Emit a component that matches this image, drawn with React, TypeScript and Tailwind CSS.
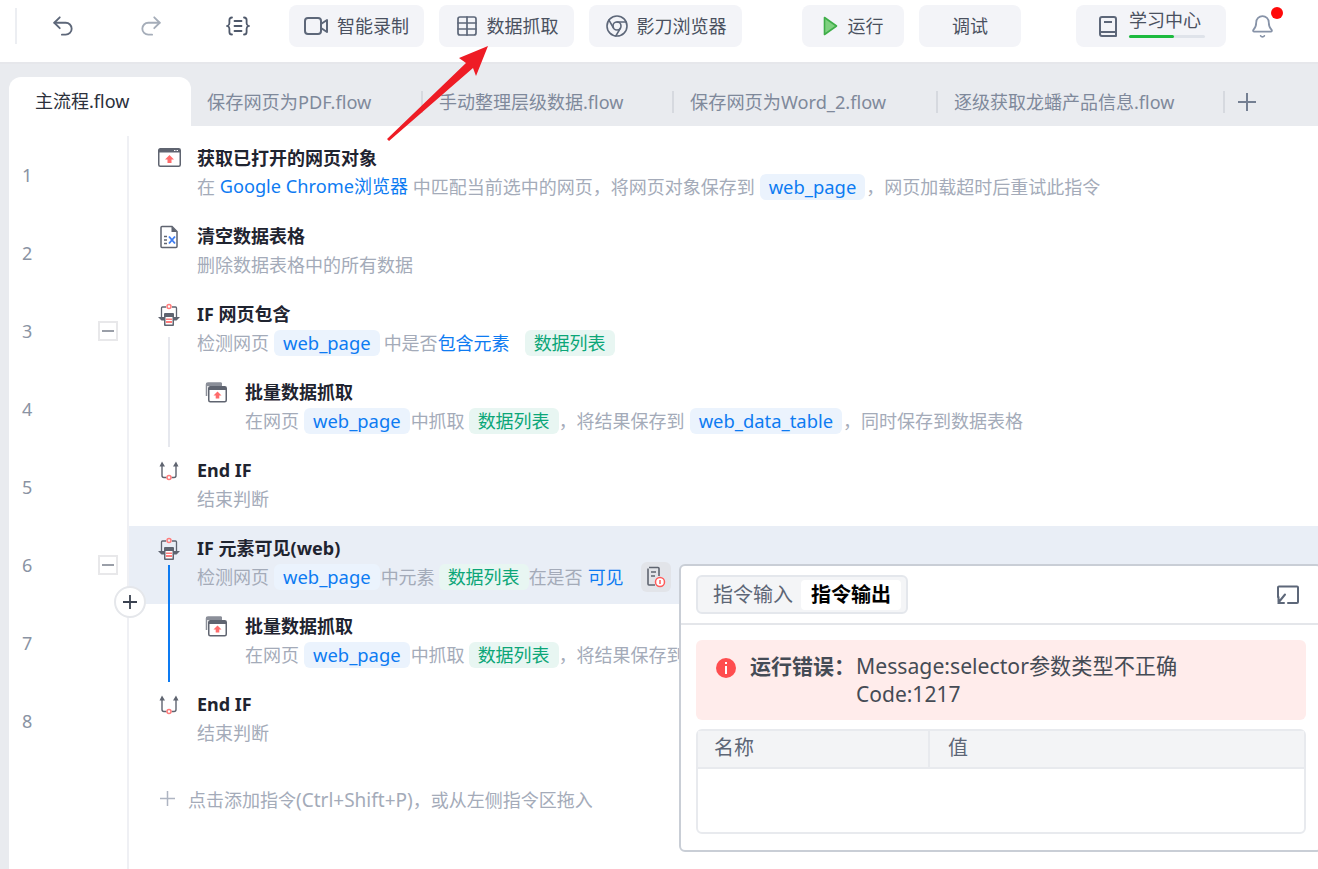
import { Bell, Chrome, Redo2, Table, Undo2 } from 'lucide-react';
import type { ReactNode } from 'react';

function ToolButton({ className, children }: { className: string; children: ReactNode }) {
  return (
    <div className={`flex h-[42px] items-center justify-center rounded-lg bg-[#f3f4f8] text-[18px] text-[#4a5160] ${className}`}>
      {children}
    </div>
  );
}

function VideoIcon() {
  return (
    <svg width="25" height="20" viewBox="0 0 25 20" fill="none" stroke="#5d6779" strokeWidth="2" strokeLinejoin="round">
      <rect x="1" y="2" width="16" height="16" rx="3" />
      <path d="M17 8l6-4v12l-6-4" />
    </svg>
  );
}

function BracesIcon() {
  return (
    <svg width="24" height="20" viewBox="0 0 24 20" fill="none" stroke="#4f596b" strokeWidth="1.8" strokeLinecap="round">
      <path d="M6 1.500c-2 0-2.600 1-2.600 2.600v3.200c0 1.400-.6 2.200-2 2.700 1.400.5 2 1.300 2 2.700v3.200c0 1.600.6 2.600 2.600 2.600" />
      <path d="M18 1.500c2 0 2.600 1 2.600 2.600v3.200c0 1.400.6 2.200 2 2.700-1.400.5-2 1.300-2 2.700v3.200c0 1.600-.6 2.600-2.600 2.600" />
      <path d="M8.500 5h7M8.500 10h7M8.500 15h7" />
    </svg>
  );
}

function BookIcon() {
  return (
    <svg width="18" height="21" viewBox="0 0 18 21" fill="none" stroke="#5d6779" strokeWidth="2" strokeLinejoin="round">
      <path d="M3 1h12a2 2 0 0 1 2 2v17H3a2 2 0 0 1-2-2V3a2 2 0 0 1 2-2z" />
      <path d="M1 16h16M5 6h8" />
    </svg>
  );
}

function Toolbar() {
  return (
    <div className="flex h-[64px] items-center border-b-2 border-[#e6e7eb] bg-white pb-[10px] pl-[15px]">
      <div className="h-[36px] w-[2px] bg-[#eceef2]" />
      <Undo2 className="ml-[33px] h-[26px] w-[26px] text-[#5d6779]" strokeWidth={1.7} />
      <Redo2 className="ml-[62px] h-[26px] w-[26px] text-[#a5adb9]" strokeWidth={1.7} />
      <div className="ml-[62px] flex w-[24px]">
        <BracesIcon />
      </div>
      <ToolButton className="ml-[39px] w-[135px] gap-[8px]">
        <VideoIcon />
        智能录制
      </ToolButton>
      <ToolButton className="ml-[15px] w-[135px] gap-[8px]">
        <Table className="h-[24px] w-[24px] text-[#5d6779]" strokeWidth={1.7} />
        数据抓取
      </ToolButton>
      <ToolButton className="ml-[15px] w-[153px] gap-[8px]">
        <Chrome className="h-[24px] w-[24px] text-[#5d6779]" strokeWidth={1.6} />
        影刀浏览器
      </ToolButton>
      <ToolButton className="ml-[60px] w-[102px] gap-[10px]">
        <svg width="15" height="20" viewBox="0 0 15 20">
          <path d="M1.500 1.500L13.500 10 1.500 18.500z" fill="#7fd080" stroke="#3fae49" strokeWidth="1.6" strokeLinejoin="round" />
        </svg>
        运行
      </ToolButton>
      <ToolButton className="ml-[15px] w-[102px]">调试</ToolButton>
      <ToolButton className="ml-[55px] w-[150px] gap-[12px] pl-[2px]">
        <BookIcon />
        <div className="-mt-[6px] flex w-[76px] flex-col">
          <span className="text-[18px] leading-[24px]">学习中心</span>
          <div className="mt-[3px] h-[3px] w-[76px] rounded-full bg-[#dfe3ea]">
            <div className="h-[3px] w-[45px] rounded-full bg-[#1dbb3f]" />
          </div>
        </div>
      </ToolButton>
      <div className="relative ml-[24px]">
        <Bell className="h-[25px] w-[25px] text-[#8793a8]" strokeWidth={1.7} />
        <div className="absolute top-[-7px] left-[21px] h-[12px] w-[12px] rounded-full bg-[#ff0a0a]" />
      </div>
    </div>
  );
}

const tabs = [
  { name: '保存网页为PDF.flow', className: 'w-[232px] text-[18.2px]' },
  { name: '手动整理层级数据.flow', className: 'w-[251px] text-[18px]' },
  { name: '保存网页为Word_2.flow', className: 'w-[264px] text-[18.2px]' },
  { name: '逐级获取龙蟠产品信息.flow', className: 'w-[287px] text-[18px]' },
];

function TabBar() {
  return (
    <div className="flex h-[62px] items-end bg-[#e9ebef] pl-[9px]">
      <div className="flex h-[49px] w-[182px] items-center rounded-t-xl bg-white pl-[26px] text-[18px] text-[#2b303b]">
        主流程.flow
      </div>
      {tabs.map((tab) => (
        <div key={tab.name} className={`flex h-[49px] items-center justify-between pl-[16px] text-[#7f899b] ${tab.className}`}>
          <span className="pt-[2px] whitespace-nowrap">{tab.name}</span>
          <div className="h-[22px] w-[2px] bg-[#d6d9df]" />
        </div>
      ))}
      <div className="flex h-[49px] items-center pl-[12px]">
        <svg width="20" height="20" viewBox="0 0 20 20" stroke="#747f92" strokeWidth="2">
          <path d="M10 1v18M1 10h18" />
        </svg>
      </div>
    </div>
  );
}

function T({ children }: { children: ReactNode }) {
  return <span className="whitespace-pre text-[#a4abb9]">{children}</span>;
}

function B({ children }: { children: ReactNode }) {
  return <span className="whitespace-pre text-[#0d7bf2]">{children}</span>;
}

function Tag({ children }: { children: ReactNode }) {
  return (
    <span className="mr-[1px] ml-[5px] flex h-[26px] items-center rounded-md bg-[#ebf3fd] px-[9px] text-[18.4px] whitespace-nowrap text-[#0d7bf2]">
      {children}
    </span>
  );
}

function Green({ children }: { children: ReactNode }) {
  return (
    <span className="ml-[4px] flex h-[26px] items-center rounded-md bg-[#e8f6f2] px-[9px] whitespace-nowrap text-[#0ca678]">
      {children}
    </span>
  );
}

function PageIcon() {
  return (
    <svg width="24" height="22" viewBox="0 0 24 22" fill="none">
      <rect x="0.750" y="1.750" width="21.500" height="17.500" rx="1.500" stroke="#5f6470" strokeWidth="1.500" fill="#fff" />
      <path d="M1 2h21v3.500H1z" fill="#5f6470" />
      <path d="M16 3h1.500v1H16zM18.500 3H20v1h-1.500z" fill="#fff" />
      <path d="M11.500 8l4.500 4.500h-2.500v3.500h-4v-3.500H7z" fill="#ff6b6b" />
    </svg>
  );
}

function PagesIcon() {
  return (
    <svg width="24" height="22" viewBox="0 0 24 22" fill="none">
      <path d="M2.500 15V3.500a1.500 1.500 0 0 1 1.500-1.500h13.500" stroke="#8b8f99" strokeWidth="1.500" />
      <path d="M2 2h16v3H2z" fill="#8b8f99" />
      <rect x="4.750" y="5.750" width="17.500" height="15" rx="1.500" stroke="#5f6470" strokeWidth="1.500" fill="#fff" />
      <path d="M5 6h17v3H5z" fill="#5f6470" />
      <path d="M13.500 10.500l4 4h-2.200v3h-3.600v-3H9.500z" fill="#ff6b6b" />
    </svg>
  );
}

function SheetIcon() {
  return (
    <svg width="24" height="24" viewBox="0 0 24 24" fill="none">
      <path d="M4 1.500h10l5 5v15a1 1 0 0 1-1 1H4a1 1 0 0 1-1-1v-19a1 1 0 0 1 1-1z" stroke="#5f6470" strokeWidth="1.500" />
      <path d="M13.500 1.500v5.500H19z" fill="#5f6470" />
      <path d="M6 11.500h3M6 15h3M6 18.500h3" stroke="#5f6470" strokeWidth="1.500" />
      <path d="M11 11.500l6 7M17 11.500l-6 7" stroke="#3f7df0" strokeWidth="1.900" />
    </svg>
  );
}

function IfIcon() {
  return (
    <svg width="24" height="26" viewBox="0 0 24 26" fill="none">
      <circle cx="11" cy="3.500" r="2" stroke="#ff7b7b" strokeWidth="1.500" />
      <path d="M8 4H4.500a1 1 0 0 0-1 1v9M14 4h3.500a1 1 0 0 1 1 1v9" stroke="#5f6470" strokeWidth="1.300" />
      <path d="M0 14h7v3.500H3.500zM22 14h-7v3.500h3.500z" fill="#5f6470" />
      <rect x="6" y="10" width="10" height="13" rx="1" fill="#5f6470" />
      <path d="M7.500 14h7v7.500h-7z" fill="#fff" />
      <path d="M8 15.500h6v4.500H8z" fill="#ff7b7b" />
      <path d="M8 17.500h6" stroke="#fff" strokeWidth="1" />
    </svg>
  );
}

function EndIfIcon() {
  return (
    <svg width="24" height="22" viewBox="0 0 24 22" fill="none">
      <path d="M1.500 7.500l2.500-5 3 5zM15 7.500l3-5 2.500 5z" fill="#5f6470" />
      <path d="M4 6v10.500a2 2 0 0 0 2 2h2.500M18 6v10.500a2 2 0 0 1-2 2h-2.500" stroke="#5f6470" strokeWidth="1.400" />
      <circle cx="11" cy="18.500" r="2" stroke="#ff7b7b" strokeWidth="1.500" />
    </svg>
  );
}

function CollapseBox() {
  return (
    <div className="mr-[9px] ml-auto flex h-[20px] w-[20px] items-center justify-center border-2 border-[#e8e8ea] bg-white">
      <div className="h-[2px] w-[12px] bg-[#9a9fa8]" />
    </div>
  );
}

type RowProps = {
  n: number;
  icon: ReactNode;
  title: string;
  nested?: boolean;
  collapse?: boolean;
  active?: boolean;
  children: ReactNode;
};

function Row({ n, icon, title, nested, collapse, active, children }: RowProps) {
  return (
    <div className="flex h-[78px]">
      <div className="flex w-[118px] items-center pl-[13px] text-[18px] text-[#8a93a3]">
        {n}
        {collapse && <CollapseBox />}
      </div>
      <div
        className={`flex flex-1 overflow-hidden border-l-2 border-[#eff0f4] pt-[9px] ${nested ? 'pl-[75px]' : 'pl-[29px]'} ${active ? 'bg-[#e9eef6]' : ''}`}
      >
        <div className={`shrink-0 pt-[2px] ${nested ? 'w-[41px]' : 'w-[39px]'}`}>{icon}</div>
        <div className="min-w-0 flex-1">
          <div className="h-[26px] text-[18px] leading-[26px] font-bold text-[#1f2430]">{title}</div>
          <div className="flex h-[32px] items-center text-[18px]">{children}</div>
        </div>
      </div>
    </div>
  );
}

function Flow() {
  return (
    <div className="relative flex flex-1 flex-col pt-[10px]">
      <Row n={1} icon={<PageIcon />} title="获取已打开的网页对象">
        <T>在 </T>
        <B>
          <span className="text-[18.2px]">Google Chrome</span>浏览器
        </B>
        <T> 中匹配当前选中的网页，将网页对象保存到</T>
        <Tag>web_page</Tag>
        <T>，网页加载超时后重试此指令</T>
      </Row>
      <Row n={2} icon={<SheetIcon />} title="清空数据表格">
        <T>删除数据表格中的所有数据</T>
      </Row>
      <Row n={3} icon={<IfIcon />} title="IF 网页包含" collapse>
        <T>检测网页</T>
        <Tag>web_page</Tag>
        <span className="w-[3px]" />
        <T>中是否</T>
        <B>包含元素</B>
        <span className="w-[11px]" />
        <Green>数据列表</Green>
      </Row>
      <Row n={4} icon={<PagesIcon />} title="批量数据抓取" nested>
        <T>在网页</T>
        <Tag>web_page</Tag>
        <T>中抓取</T>
        <Green>数据列表</Green>
        <T>，将结果保存到</T>
        <Tag>web_data_table</Tag>
        <T>，同时保存到数据表格</T>
      </Row>
      <Row n={5} icon={<EndIfIcon />} title="End IF">
        <T>结束判断</T>
      </Row>
      <Row n={6} icon={<IfIcon />} title="IF 元素可见(web)" collapse active>
        <T>检测网页</T>
        <Tag>web_page</Tag>
        <T>中元素</T>
        <Green>数据列表</Green>
        <T>在是否</T>
        <span className="w-[5px]" />
        <B>可见</B>
        <div className="ml-[17px] flex h-[30px] w-[30px] items-center justify-center rounded-md bg-[#e2e4e9]">
          <svg width="20" height="22" viewBox="0 0 20 22" fill="none">
            <path d="M3 1.500h9a1 1 0 0 1 1 1V10M9 19H3a1 1 0 0 1-1-1V2.500" stroke="#5f6470" strokeWidth="1.600" />
            <path d="M5 6h5M5 10h4" stroke="#5f6470" strokeWidth="1.600" />
            <circle cx="14" cy="16" r="4.500" stroke="#ff5a5a" strokeWidth="1.500" fill="#fff" />
            <path d="M14 14v4" stroke="#ff5a5a" strokeWidth="1.500" />
          </svg>
        </div>
      </Row>
      <Row n={7} icon={<PagesIcon />} title="批量数据抓取" nested>
        <T>在网页</T>
        <Tag>web_page</Tag>
        <T>中抓取</T>
        <Green>数据列表</Green>
        <T>，将结果保存到</T>
      </Row>
      <Row n={8} icon={<EndIfIcon />} title="End IF">
        <T>结束判断</T>
      </Row>

      {/* add instruction hint */}
      <div className="ml-[118px] flex flex-1 items-start gap-[13px] border-l-2 border-[#eff0f4] pt-[26px] pl-[31px] text-[18px] text-[#a4abb9]">
        <svg className="mt-[5px]" width="15" height="15" viewBox="0 0 15 15" stroke="#aeb5c2" strokeWidth="1.500">
          <path d="M7.500 0v15M0 7.500h15" />
        </svg>
        <span>
          点击添加指令<span className="text-[19px]">(Ctrl+Shift+P)</span>，或从左侧指令区拖入
        </span>
      </div>

      {/* nesting lines that cross row borders */}
      <div className="absolute top-[211px] left-[159px] h-[110px] w-[2px] bg-[#e6e8ee]" />
      <div className="absolute top-[439px] left-[159px] h-[117px] w-[2px] bg-[#0d7bf2]" />
      <div className="absolute top-[460px] left-[105px] z-20 flex h-[32px] w-[32px] items-center justify-center rounded-full border-2 border-[#e5e7eb] bg-white">
        <svg width="14" height="14" viewBox="0 0 14 14" stroke="#3a4250" strokeWidth="1.800">
          <path d="M7 0v14M0 7h14" />
        </svg>
      </div>
    </div>
  );
}

function OutputPanel() {
  return (
    <div className="absolute top-[564px] left-[679px] z-30 h-[288px] w-[643px] rounded-md border-2 border-[#c9ced6] bg-white">
      <div className="flex h-[59px] items-center justify-between border-b-2 border-[#e4e6ea] pr-[20px] pl-[15px]">
        <div className="flex h-[39px] w-[212px] items-center rounded-md border-2 border-[#e4e7ec] bg-[#f4f5f7] pl-[15px] text-[20px] text-[#5d6676]">
          <span>指令输入</span>
          <span className="ml-[8px] flex h-[30px] w-[100px] items-center justify-center rounded bg-white font-bold text-black">
            指令输出
          </span>
        </div>
        <svg width="24" height="20" viewBox="0 0 24 20" fill="none" stroke="#5d6779" strokeWidth="2" strokeLinecap="round">
          <path d="M2 12V2.500a1 1 0 0 1 1-1h18a1 1 0 0 1 1 1V17a1 1 0 0 1-1 1h-9" />
          <path d="M9 9.500l-6.500 8M2.500 12v6h5.500" />
        </svg>
      </div>
      <div className="pt-[15px] pr-[14px] pl-[15px]">
        <div className="flex h-[80px] rounded-md bg-[#ffeceb] pt-[12px] pl-[20px] text-[21px] leading-[28px] text-[#454b55]">
          <div className="mt-[6px] flex h-[20px] w-[20px] items-center justify-center rounded-full bg-[#ff4d4f]">
            <svg width="4" height="12" viewBox="0 0 4 12" fill="#fff">
              <rect x="1" y="0" width="2" height="2" />
              <rect x="1" y="4" width="2" height="8" />
            </svg>
          </div>
          <span className="ml-[14px] w-[106px] shrink-0 font-bold whitespace-nowrap">运行错误：</span>
          <div className="whitespace-nowrap">
            <div className="text-[21.2px]">Message:selector参数类型不正确</div>
            <div>Code:1217</div>
          </div>
        </div>
        <div className="mt-[9px] h-[105px] rounded-md border-2 border-[#e8eaee]">
          <div className="flex h-[38px] border-b-2 border-[#e8eaee] bg-[#f3f4f6] text-[20px] text-[#5d6676]">
            <div className="w-[232px] border-r-2 border-[#e8eaee] pl-[16px] leading-[34px]">名称</div>
            <div className="pl-[18px] leading-[34px]">值</div>
          </div>
        </div>
      </div>
    </div>
  );
}

export default function App() {
  return (
    <div className="relative flex h-[869px] w-[1318px] flex-col overflow-hidden bg-white [font-family:'Noto_Sans','Noto_Sans_CJK_SC',sans-serif]">
      <Toolbar />
      <TabBar />
      <div className="flex flex-1">
        <div className="w-[9px] bg-[#e9ebef]" />
        <Flow />
      </div>
      <OutputPanel />
      {/* red annotation arrow */}
      <svg className="absolute top-0 left-0 z-40" width="520" height="150" viewBox="0 0 520 150">
        <path d="M488 46L459 58 466 63 387 139 389 141 473 68 476 76z" fill="#ee1c25" />
      </svg>
    </div>
  );
}
